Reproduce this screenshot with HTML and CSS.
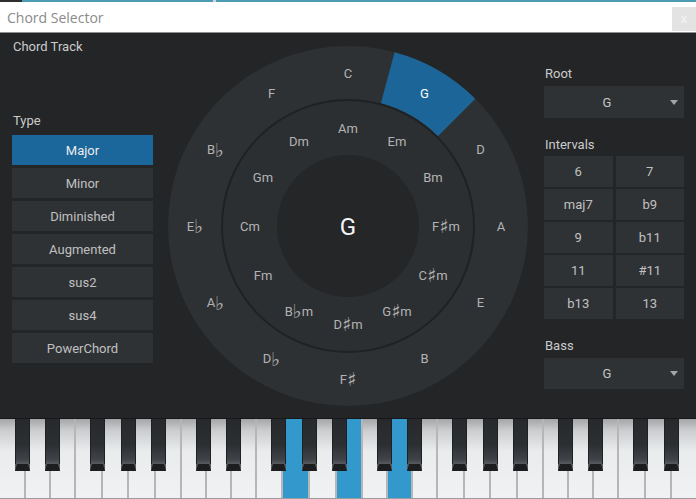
FILE: index.html
```html
<!DOCTYPE html>
<html lang="en">
<head>
<meta charset="utf-8">
<title>Chord Selector</title>
<link rel="stylesheet" href="styles.css">
</head>
<body>
<div class="app">
  <div class="accent"><span class="acc-dark"></span><span class="acc-teal1"></span><span class="acc-gap"></span><span class="acc-teal2"></span></div>
  <header class="titlebar">
    <span class="title">Chord Selector</span>
    <button class="close">x</button>
  </header>
  <main class="main">
    <section class="left">
      <div class="label">Chord Track</div>
      <div class="label type-label">Type</div>
      <div class="types">
        <div class="btn sel">Major</div>
        <div class="btn">Minor</div>
        <div class="btn">Diminished</div>
        <div class="btn">Augmented</div>
        <div class="btn">sus2</div>
        <div class="btn">sus4</div>
        <div class="btn">PowerChord</div>
      </div>
    </section>
    <section class="center">
      <svg class="wheel" width="362" height="362" viewBox="0 0 362 362">
        <circle class="ring-outer" cx="181" cy="181" r="180"/>
        <path class="wedge" d="M227.59,7.13 A180,180 0 0 1 308.28,53.72 L270.81,91.19 A127,127 0 0 0 213.87,58.33 Z"/>
        <circle class="ring-inner" cx="181" cy="181" r="126"/>
        <circle class="core" cx="181" cy="181" r="71"/>
        <g class="lbl">
          <text x="181" y="28">C</text>
          <text x="257.5" y="48.5" class="on">G</text>
          <text x="313.5" y="104.5">D</text>
          <text x="334" y="181">A</text>
          <text x="313.5" y="257.5">E</text>
          <text x="257.5" y="313.5">B</text>
          <text x="181" y="334">F<tspan class="acc">♯</tspan></text>
          <text x="104.5" y="313.5">D<tspan class="acc">♭</tspan></text>
          <text x="48.5" y="257.5">A<tspan class="acc">♭</tspan></text>
          <text x="28" y="181">E<tspan class="acc">♭</tspan></text>
          <text x="48.5" y="104.5">B<tspan class="acc">♭</tspan></text>
          <text x="104.5" y="48.5">F</text>
          <text x="181" y="83">Am</text>
          <text x="230" y="96">Em</text>
          <text x="266" y="132">Bm</text>
          <text x="279" y="181">F<tspan class="acc">♯</tspan>m</text>
          <text x="266" y="230">C<tspan class="acc">♯</tspan>m</text>
          <text x="230" y="266">G<tspan class="acc">♯</tspan>m</text>
          <text x="181" y="279">D<tspan class="acc">♯</tspan>m</text>
          <text x="132" y="266">B<tspan class="acc">♭</tspan>m</text>
          <text x="96" y="230">Fm</text>
          <text x="83" y="181">Cm</text>
          <text x="96" y="132">Gm</text>
          <text x="132" y="96">Dm</text>
        </g>
        <text class="big" x="181" y="182">G</text>
      </svg>
    </section>
    <section class="right">
      <div class="label">Root</div>
      <div class="select"><span class="val">G</span><span class="arrow"></span></div>
      <div class="label gap-label">Intervals</div>
      <div class="intervals">
        <div class="cell">6</div><div class="cell">7</div>
        <div class="cell">maj7</div><div class="cell">b9</div>
        <div class="cell">9</div><div class="cell">b11</div>
        <div class="cell">11</div><div class="cell">#11</div>
        <div class="cell">b13</div><div class="cell">13</div>
      </div>
      <div class="label gap-label">Bass</div>
      <div class="select bass"><span class="val">G</span><span class="arrow"></span></div>
    </section>
  </main>
  <div class="piano">
    <svg width="696" height="80" viewBox="0 0 696 80">
      <defs>
        <linearGradient id="wg" x1="0" y1="0" x2="0" y2="1">
          <stop offset="0" stop-color="#a3a5a7"/>
          <stop offset="0.14" stop-color="#cbccce"/>
          <stop offset="0.4" stop-color="#eaebed"/>
          <stop offset="1" stop-color="#f1f2f4"/>
        </linearGradient>
        <linearGradient id="bg" x1="0" y1="0" x2="0" y2="1">
          <stop offset="0" stop-color="#27292c"/>
          <stop offset="0.5" stop-color="#2c2f32"/>
          <stop offset="0.78" stop-color="#404449"/>
          <stop offset="0.87" stop-color="#595d62"/>
        </linearGradient>
        <g id="bk">
          <rect x="0" y="0" width="15" height="52" fill="url(#bg)"/>
          <rect x="0" y="0" width="1" height="45" fill="#1e2022"/>
          <rect x="14" y="0" width="1" height="45" fill="#1e2022"/>
          <polygon points="0,52 15,52 13,45 2,45" fill="#1b1d1f"/>
        </g>
      </defs>
      <rect x="0" y="0" width="696" height="80" fill="url(#wg)"/>
      <g class="blue">
        <rect x="283" y="0" width="26" height="80"/>
        <rect x="336" y="0" width="26" height="80"/>
        <rect x="387" y="0" width="25" height="80"/>
      </g>
      <g class="div">
        <rect x="24" y="0" width="2" height="80"/>
        <rect x="49" y="0" width="2" height="80"/>
        <rect x="74" y="0" width="2" height="80"/>
        <rect x="101" y="0" width="2" height="80"/>
        <rect x="127" y="0" width="2" height="80"/>
        <rect x="154" y="0" width="2" height="80"/>
        <rect x="180" y="0" width="2" height="80"/>
        <rect x="205" y="0" width="2" height="80"/>
        <rect x="230" y="0" width="2" height="80"/>
        <rect x="255" y="0" width="2" height="80"/>
        <rect x="281" y="0" width="2" height="80"/>
        <rect x="308" y="0" width="2" height="80"/>
        <rect x="335" y="0" width="2" height="80"/>
        <rect x="361" y="0" width="2" height="80"/>
        <rect x="386" y="0" width="2" height="80"/>
        <rect x="411" y="0" width="2" height="80"/>
        <rect x="436" y="0" width="2" height="80"/>
        <rect x="463" y="0" width="2" height="80"/>
        <rect x="489" y="0" width="2" height="80"/>
        <rect x="516" y="0" width="2" height="80"/>
        <rect x="542" y="0" width="2" height="80"/>
        <rect x="567" y="0" width="2" height="80"/>
        <rect x="592" y="0" width="2" height="80"/>
        <rect x="617" y="0" width="2" height="80"/>
        <rect x="644" y="0" width="2" height="80"/>
        <rect x="670" y="0" width="2" height="80"/>
      </g>
      <rect x="0" y="79" width="696" height="1" fill="#9a9c9e"/>
      <use href="#bk" x="15"/><use href="#bk" x="45"/>
      <use href="#bk" x="90"/><use href="#bk" x="121"/><use href="#bk" x="151"/>
      <use href="#bk" x="196"/><use href="#bk" x="226"/>
      <use href="#bk" x="271"/><use href="#bk" x="302"/><use href="#bk" x="332"/>
      <use href="#bk" x="377"/><use href="#bk" x="407"/>
      <use href="#bk" x="452"/><use href="#bk" x="483"/><use href="#bk" x="513"/>
      <use href="#bk" x="558"/><use href="#bk" x="588"/>
      <use href="#bk" x="633"/><use href="#bk" x="664"/>
    </svg>
  </div>
</div>
</body>
</html>
```

FILE: styles.css
```css
* { box-sizing: border-box; margin: 0; padding: 0; }
html, body {
  width: 696px;
  height: 499px;
  overflow: hidden;
  background: #232527;
}
body {
  font-family: Roboto, "Liberation Sans", "DejaVu Sans", sans-serif;
}
.app {
  display: flex;
  flex-direction: column;
  width: 696px;
  height: 499px;
}
.accent { display: flex; height: 2px; }
.acc-dark { width: 22px; background: #2c2e30; }
.acc-teal1 { width: 191px; background: #4a9bb3; }
.acc-gap { width: 3px; background: #c9d6da; }
.acc-teal2 { flex: 1; background: #4a9bb3; }

.titlebar {
  height: 31px;
  background: #ffffff;
  border-bottom: 1px solid #8e8f90;
  display: flex;
  align-items: center;
  justify-content: space-between;
}
.title {
  font-family: "Open Sans", "Liberation Sans", sans-serif;
  font-size: 14px;
  color: #8a8a8a;
  padding-left: 7px;
}
.close {
  align-self: flex-start;
  margin-top: 5px;
  width: 24px;
  height: 24px;
  border: none;
  background: #e3e3e3;
  color: #f6f6f6;
  font-family: "Liberation Sans", sans-serif;
  font-size: 12px;
  line-height: 24px;
}

.main {
  display: grid;
  grid-template-columns: 167px 362px 167px;
  height: 385px;
}

.label {
  font-size: 13px;
  line-height: 16px;
  color: #cbcbcb;
  padding-left: 1px;
}

.left { padding: 6px 0 0 12px; }
.type-label { margin-top: 58px; }
.types {
  margin-top: 6px;
  width: 141px;
  display: flex;
  flex-direction: column;
  gap: 3px;
}
.btn {
  height: 30px;
  background: #2f3235;
  color: #c0c0c0;
  font-size: 13px;
  display: flex;
  align-items: center;
  justify-content: center;
}
.btn.sel {
  background: #1b669b;
  color: #ececec;
}

.center { padding-top: 12px; }
.wheel { display: block; }
.ring-outer { fill: #2e3134; }
.wedge { fill: #1b6598; }
.ring-inner { fill: #2c2f32; stroke: #1f2123; stroke-width: 2; }
.core { fill: #242628; }
.lbl text {
  font-family: Roboto, "DejaVu Sans", sans-serif;
  font-size: 13px;
  fill: #b3b3b3;
  text-anchor: middle;
  dominant-baseline: central;
}
.lbl .acc {
  font-family: "DejaVu Sans", sans-serif;
  font-size: 19px;
}
.lbl text.on { fill: #ffffff; }
.big {
  font-family: Roboto, "DejaVu Sans", sans-serif;
  font-size: 24px;
  fill: #f4f4f4;
  text-anchor: middle;
  dominant-baseline: central;
}

.right { padding: 33px 0 0 15px; }
.select {
  margin-top: 4px;
  width: 140px;
  height: 32px;
  background: #2f3235;
  display: flex;
  align-items: center;
}
.select.bass { height: 31px; }
.val {
  flex: 1;
  text-align: center;
  color: #c6c6c6;
  font-size: 13px;
}
.arrow {
  width: 0;
  height: 0;
  border-left: 4px solid transparent;
  border-right: 4px solid transparent;
  border-top: 5px solid #a4a4a4;
  margin-right: 6px;
}
.gap-label { margin-top: 19px; }
.intervals {
  margin-top: 3px;
  width: 140px;
  display: grid;
  grid-template-columns: 1fr 1fr;
  grid-auto-rows: 31px;
  gap: 2px 3px;
}
.cell {
  background: #2f3235;
  color: #c0c0c0;
  font-size: 13px;
  display: flex;
  align-items: center;
  justify-content: center;
}

.piano {
  height: 81px;
  border-top: 1px solid #161719;
  overflow: hidden;
}
.piano svg { display: block; }
.blue rect { fill: #3399cc; }
.div rect { fill: #b4b6b8; }
```
